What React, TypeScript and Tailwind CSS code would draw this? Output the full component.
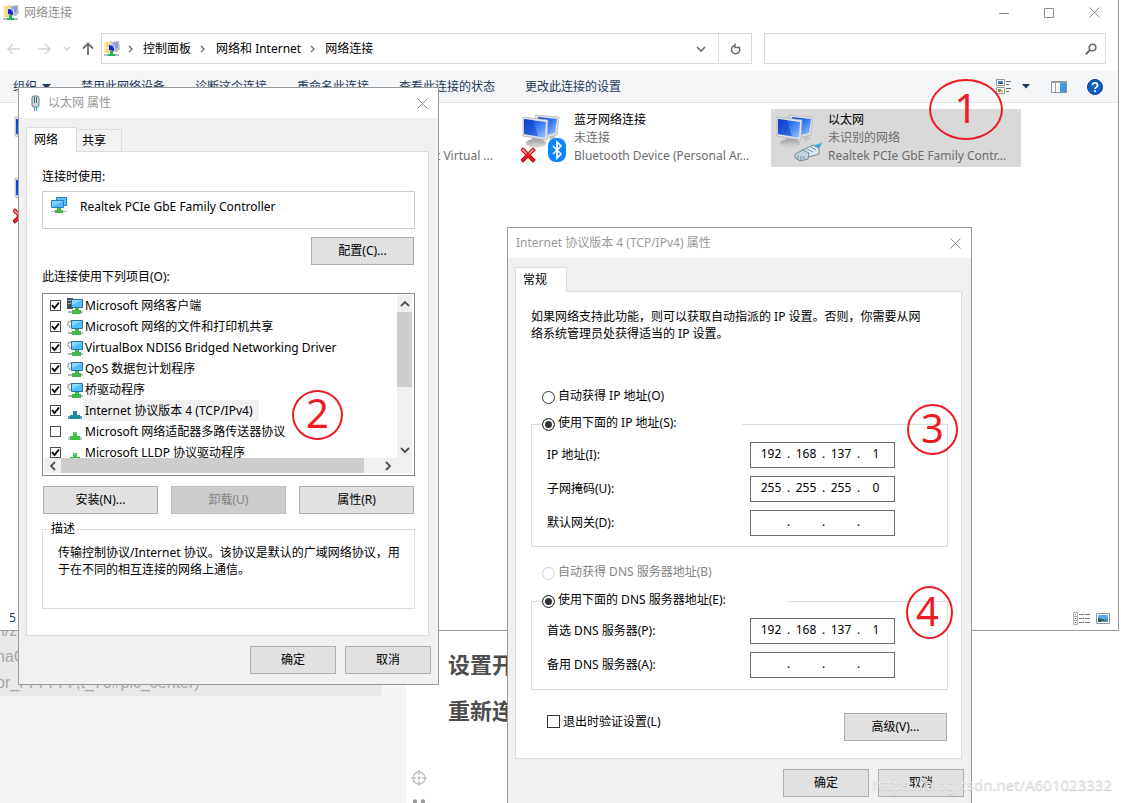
import type { ReactNode } from "react";
import clsx from "clsx";

/* ---------- icons ---------- */

function FolderNetIcon() {
  return (
    <svg width="16" height="16" viewBox="0 0 16 16" className="shrink-0">
      <path d="M0 1h5l1-1h2v12H0z" fill="#f6dc7c" />
      <path d="M0 1h2v11H0z" fill="#fbeeb0" />
      <path d="M7 1l8-1 1 8-3 3H8z" fill="#b9bfca" />
      <path d="M9 2l5-1v6l-4 1z" fill="#8c9bd8" />
      <path d="M4 3l7 1v7l-6-1z" fill="#d5d9e2" />
      <path d="M5 4l5 1v5l-5-1z" fill="#1226c8" />
      <path d="M7 4l3 1v3z" fill="#5f7cf0" />
      <path d="M6 10h3v3h2v2H4v-2h2z" fill="#1db954" />
      <path d="M0 13h4v2H0zM11 13h4v2h-4z" fill="#b9bec4" />
    </svg>
  );
}

function MonitorsIcon({ kind, off }: { kind: "bluetooth" | "cable" | "none"; off?: boolean }) {
  return (
    <svg width="48" height="54" viewBox="0 0 48 54" className="shrink-0">
      <defs>
        <linearGradient id="screen" x1="0" y1="0" x2="1" y2="1">
          <stop offset="0" stopColor="#0d3fcb" />
          <stop offset="0.45" stopColor="#2f74ee" />
          <stop offset="1" stopColor="#9cc8ff" />
        </linearGradient>
        <linearGradient id="stand" x1="0" y1="0" x2="0" y2="1">
          <stop offset="0" stopColor="#9b9da0" />
          <stop offset="1" stopColor="#dcdcdc" />
        </linearGradient>
      </defs>
      <path d="M27 26l5-1 4 5-6 3z" fill="#c4c6c8" />
      <path d="M14 6l24 2-2 18-16 4z" fill="#dedfdf" stroke="#b3b5b8" strokeWidth="0.7" />
      <path d="M17 8l19 2-2 14-13 3z" fill="url(#screen)" />
      <path d="M11 27l11 2v6H11z" fill="#a9abad" />
      <ellipse cx="15" cy="34" rx="10" ry="4" fill="url(#stand)" stroke="#bdbdbd" strokeWidth="0.6" />
      <path d="M2 8l25 3-1 20-24-4z" fill="#e4e5e5" stroke="#a9abad" strokeWidth="0.7" />
      <path d="M3 10l22 3-1 16-21-4z" fill="url(#screen)" />
      <path d="M3 10l9 1 5 16-14-2z" fill="#0b37be" opacity="0.45" />
      {off && (
        <g strokeLinecap="square" fill="none">
          <path d="M2 41l10 10M12 41L2 51" stroke="#b00000" strokeWidth="4" />
          <path d="M2 41l10 10M12 41L2 51" stroke="#ea1c22" strokeWidth="2.4" />
          <path d="M2 41l3 3M12 41l-3 3" stroke="#f58a8a" strokeWidth="2" />
        </g>
      )}
      {kind === "bluetooth" && (
        <g>
          <rect x="27" y="29" width="18" height="24" rx="8" fill="#0a84ff" />
          <path d="M32 37l8 8-4 4V33l4 4-8 8" fill="none" stroke="#fff" strokeWidth="1.7" />
        </g>
      )}
      {kind === "cable" && (
        <g stroke="#5e7484" strokeWidth="0.8">
          <path d="M38 37l9-3-3 5-4 2z" fill="#27a6dc" stroke="#6fb8d6" />
          <path d="M26 42l12-6 6 3v6l-14 4-4-2z" fill="#dbe9f3" />
          <path d="M20 45l8-4 6 3-1 6-8 2-5-3z" fill="#c5d5e0" />
          <path d="M23 46v4M26 47v4M29 47v3M32 40l6 3M36 38l5 3" fill="none" />
        </g>
      )}
    </svg>
  );
}

function AdapterIcon() {
  return (
    <svg width="16" height="16" viewBox="0 0 16 16" className="shrink-0">
      <path d="M5.500.5h10v8h-10z" fill="#5cc3fb" stroke="#2a7fb5" />
      <path d="M.5 3.500h12v7H.5z" fill="#48bafb" stroke="#2a7fb5" />
      <path d="M1 4h11L1 10z" fill="#7fd2ff" />
      <path d="M6 11h4v2h2v3H4v-3h2z" fill="#44b649" />
      <path d="M0 14h4v1H0zM12 14h4v1h-4z" fill="#b0b4b8" />
    </svg>
  );
}

function ServiceIcon({ kind }: { kind: string }) {
  if (kind === "protocol" || kind === "selected") {
    const sel = kind === "selected";
    return (
      <svg width="16" height="16" viewBox="0 0 16 16" className="shrink-0">
        <path d="M1 13h4v3H1zM11 13h4v3h-4z" fill={sel ? "#4e9fd4" : "#c5cac8"} />
        <path d="M6 8h4v4h3v4H3v-4h3z" fill={sel ? "#1b8a94" : "#3fbf46"} />
        <path d="M6 8h4v2H6z" fill={sel ? "#2b7fa6" : "#64cf68"} />
      </svg>
    );
  }
  return (
    <svg width="16" height="16" viewBox="0 0 16 16" className="shrink-0">
      {kind === "client" ? (
        <>
          <path d="M0 0h6v11H0z" fill="#4a4f54" />
          <path d="M1 2h3v1H1zM1 5h3v1H1z" fill="#a5abb0" />
        </>
      ) : (
        <circle cx="4" cy="5" r="3" fill="none" stroke="#9aa1a6" strokeWidth="2" strokeDasharray="1.700 .9" />
      )}
      <path d="M4.500 1.500h11v8h-11z" fill="#4fbdff" stroke="#2c6f9b" />
      <path d="M5 2h10L5 7z" fill="#8cd7ff" />
      <path d="M8 10h4v2h2v4H5v-4h3z" fill="#43b84a" />
      <path d="M1 13h4v2H1zM14 13h2v2h-2z" fill="#b0b4b8" />
    </svg>
  );
}

function PlugIcon() {
  return (
    <svg width="10" height="16" viewBox="0 0 10 16" className="shrink-0">
      <rect x="1" y="1" width="7" height="11" rx="2" fill="#c9d6de" stroke="#69808f" />
      <path d="M3.500 2v6M5.500 2v6" stroke="#546b7b" />
      <path d="M3.500 12v4M5.500 12v4" stroke="#2f9bd0" />
    </svg>
  );
}

function CloseIcon() {
  return (
    <svg width="11" height="11" viewBox="0 0 11 11" fill="none" stroke="#8c8c8c">
      <path d="M.5.5l10 10M10.500.5l-10 10" />
    </svg>
  );
}

function Chevron({ d, color = "#6d6d6d", width = 1.3 }: { d: string; color?: string; width?: number }) {
  return (
    <svg width="10" height="10" viewBox="0 0 10 10" fill="none" stroke={color} strokeWidth={width} className="shrink-0">
      <path d={d} />
    </svg>
  );
}

const RIGHT = "M3 2l3 3-3 3";
const DOWN = "M1 3l4 4 4-4";

function Arrow({ flip }: { flip?: boolean }) {
  return (
    <svg width="14" height="12" viewBox="0 0 14 12" fill="none" stroke="#d4d4d4" strokeWidth="1.500" className="shrink-0">
      <path d={flip ? "M1 6h12M8 1l5 5-5 5" : "M13 6H1M6 1L1 6l5 5"} />
    </svg>
  );
}

/* ---------- small controls ---------- */

function PushButton({ children, className, disabled }: { children: ReactNode; className?: string; disabled?: boolean }) {
  return (
    <button
      type="button"
      disabled={disabled}
      className={clsx(
        "h-[28px] border text-center",
        disabled ? "border-[#bfbfbf] bg-[#cccccc] text-[#838383]" : "border-[#adadad] bg-[#e1e1e1]",
        className
      )}
    >
      {children}
    </button>
  );
}

function Check({ id, checked, size = "size-[11px]", border = "border-[#4d4d4d]" }: { id: string; checked?: boolean; size?: string; border?: string }) {
  return (
    <span className="grid shrink-0 place-items-center">
      <input id={id} type="checkbox" defaultChecked={checked} className={clsx("peer appearance-none border bg-white [grid-area:1/1]", size, border)} />
      <svg width="9" height="9" viewBox="0 0 9 9" className="pointer-events-none hidden [grid-area:1/1] peer-checked:block">
        <path d="M1 4l2.500 3L8 1.500" fill="none" stroke="#000" strokeWidth="1.900" />
      </svg>
    </span>
  );
}

function Radio({ id, name, checked, disabled, children }: { id: string; name: string; checked?: boolean; disabled?: boolean; children: ReactNode }) {
  return (
    <span className="flex h-4 items-center gap-[3px]">
      <input
        id={id}
        name={name}
        type="radio"
        defaultChecked={checked}
        disabled={disabled}
        className="size-[13px] appearance-none rounded-full border border-[#333] bg-white checked:bg-[#333] checked:shadow-[inset_0_0_0_2px_white] disabled:border-[#ccc]"
      />
      <label htmlFor={id} className={clsx("pb-[2px] leading-4", disabled && "text-[#838383]")}>{children}</label>
    </span>
  );
}

function AddressRow({ label, octets }: { label: string; octets: string[] }) {
  return (
    <div className="flex h-[26px] items-center justify-between pr-[52px] pl-[15px]">
      <span>{label}</span>
      <div className="flex h-[26px] w-[145px] items-center border border-[#6d6d6d] bg-white pb-[2px] pl-[5px]">
        {octets.map((octet, i) => (
          <span key={i} className="flex items-center">
            {i > 0 && <span className="w-[5px] text-center">.</span>}
            <input aria-label={`${label} ${i + 1}`} defaultValue={octet} className="w-[30px] bg-transparent text-center" />
          </span>
        ))}
      </div>
    </div>
  );
}

function Mark({ children, className }: { children: ReactNode; className: string }) {
  return (
    <div
      className={clsx(
        "pointer-events-none absolute z-20 flex items-center justify-center rounded-[50%] border-2 border-[#ed1c24] pb-1 text-[40px] leading-none text-[#ed1c24]",
        className
      )}
    >
      {children}
    </div>
  );
}

/* ---------- explorer window ---------- */

function Connection({ name, status, device, kind, off, selected }: {
  name?: string; status?: string; device?: string; kind: "bluetooth" | "cable" | "none"; off?: boolean; selected?: boolean;
}) {
  return (
    <div className={clsx("flex h-[58px] w-[250px] gap-[5px] pl-1", selected && "bg-[#d9d9d9]")}>
      <MonitorsIcon kind={kind} off={off} />
      <div className="pt-[2px] leading-[18px] whitespace-nowrap text-[#6d6d6d]">
        <div className="h-[18px] text-black">{name}</div>
        <div className="h-[18px]">{status}</div>
        <div>{device}</div>
      </div>
    </div>
  );
}

function Explorer() {
  return (
    <section className="absolute top-0 right-[2px] left-0 flex h-[631px] flex-col border-r border-b border-[#9a9a9a] bg-white">
      <header className="flex h-[25px] items-center pl-[3px] text-[#8f8f8f]">
        <FolderNetIcon />
        <h1 className="ml-[5px] flex-1">网络连接</h1>
        <button type="button" aria-label="最小化" className="flex w-[45px] justify-center">
          <svg width="10" height="10" viewBox="0 0 10 10" stroke="#8c8c8c"><path d="M0 5.500h10" /></svg>
        </button>
        <button type="button" aria-label="最大化" className="flex w-[45px] justify-center">
          <svg width="10" height="10" viewBox="0 0 10 10" fill="none" stroke="#8c8c8c"><path d="M.5.5h9v9h-9z" /></svg>
        </button>
        <button type="button" aria-label="关闭" className="flex w-[47px] justify-center"><CloseIcon /></button>
      </header>

      <nav className="flex h-[46px] items-center pt-px pr-[12px] pl-[7px]">
        <div className="flex w-[94px] items-center">
          <Arrow />
          <span className="ml-4"><Arrow flip /></span>
          <span className="ml-[11px]"><Chevron d="M2 3l3 3 3-3" color="#cfcfcf" /></span>
          <svg width="12" height="13" viewBox="0 0 12 13" fill="none" stroke="#6d6d6d" strokeWidth="1.800" className="ml-[10px]">
            <path d="M6 13V1.500M1 6.500l5-5 5 5" />
          </svg>
        </div>
        <div className="flex h-[31px] flex-1 items-center border border-[#d9d9d9] pl-[2px]">
          <FolderNetIcon />
          <span className="mx-[6px]"><Chevron d={RIGHT} /></span>
          <a href="#panel" className="ml-px">控制面板</a>
          <span className="mx-[7px]"><Chevron d={RIGHT} /></span>
          <a href="#internet" className="ml-px">网络和 Internet</a>
          <span className="mx-[7px]"><Chevron d={RIGHT} /></span>
          <a href="#connections">网络连接</a>
          <span className="ml-auto pr-3"><Chevron d={DOWN} width={1.6} /></span>
          <button type="button" aria-label="刷新" className="flex h-full w-[33px] items-center justify-center border-l border-[#d9d9d9]">
            <svg width="11" height="12" viewBox="0 0 11 12" fill="none" stroke="#6d6d6d" strokeWidth="1.500">
              <path d="M8.500 3.500A4.200 4.200 0 1 1 4.500 2.500" />
              <path d="M5 .5v4h4" />
            </svg>
          </button>
        </div>
        <div className="ml-3 flex h-[31px] w-[342px] items-center border border-[#d9d9d9] pr-2">
          <input aria-label="搜索" type="search" className="h-full min-w-0 flex-1 pl-2" />
          <svg width="12" height="12" viewBox="0 0 12 12" fill="none" stroke="#6d6d6d">
            <circle cx="7.500" cy="4.500" r="3.300" strokeWidth="1.600" />
            <path d="M5 7L.8 11.200" strokeWidth="2" />
          </svg>
        </div>
      </nav>

      <div className="flex h-8 items-center gap-[30px] border-b border-[#e5e5e5] bg-[#f5f6f7] pr-[15px] pl-[13px] text-[#1e395b]">
        <button type="button" className="flex items-center gap-[5px]">
          组织
          <svg width="9" height="5" viewBox="0 0 9 5"><path d="M0 0h9L4.500 5z" fill="#1e395b" /></svg>
        </button>
        <button type="button">禁用此网络设备</button>
        <button type="button">诊断这个连接</button>
        <button type="button">重命名此连接</button>
        <button type="button">查看此连接的状态</button>
        <button type="button">更改此连接的设置</button>
        <div className="ml-auto flex items-center">
          <svg width="16" height="15" viewBox="0 0 16 15" fill="none">
            <path d="M.5.5h8v6h-8zM.5 8.500h8v6h-8z" fill="#fff" stroke="#9a9a9a" />
            <path d="M2 2h5v3H2z" fill="#3d86d8" /><path d="M2 4h5v1H2z" fill="#27604a" />
            <path d="M2 10h3v3H2z" fill="#56a33e" /><path d="M4 11h3v2H4z" fill="#e0a63a" />
            <path d="M10 2.500h5M10 5.500h3M10 9.500h5M10 12.500h3" stroke="#6d6d6d" />
          </svg>
          <svg width="8" height="5" viewBox="0 0 8 5" className="ml-[10px]"><path d="M0 0h8L4 4.500z" fill="#1e395b" /></svg>
          <svg width="16" height="12" viewBox="0 0 16 12" className="ml-[21px]">
            <path d="M.5.5h15v11H.5z" fill="#fff" stroke="#8a9097" />
            <path d="M1 1h14v1H1zM4 2h1v9H4z" fill="#9aa5af" />
            <path d="M9 2h6v9H9z" fill="#3f97df" />
          </svg>
          <svg width="16" height="16" viewBox="0 0 16 16" className="ml-5">
            <circle cx="8" cy="8" r="7.500" fill="#0a5fc0" stroke="#083f86" />
            <path d="M5.500 6.200a2.500 2.300 0 1 1 3.700 2C8.400 8.700 8 9 8 10" fill="none" stroke="#fff" strokeWidth="1.800" />
            <circle cx="8" cy="12.200" r="1.100" fill="#fff" />
          </svg>
        </div>
      </div>

      <div className="grid flex-1 grid-cols-[repeat(4,250px)] content-start gap-x-1 gap-y-[3px] pt-[6px] pl-[9px]">
        <Connection kind="none" />
        <Connection kind="none" device="Microsoft Wi-Fi Direct Virtual ..." />
        <Connection kind="bluetooth" off name="蓝牙网络连接" status="未连接" device="Bluetooth Device (Personal Ar..." />
        <Connection kind="cable" selected name="以太网" status="未识别的网络" device="Realtek PCIe GbE Family Contr..." />
        <Connection kind="none" off />
      </div>

      <footer className="flex h-6 items-center gap-[6px] pr-2 pl-[9px] text-[#1e395b]">
        <span className="flex-1">5</span>
        <svg width="17" height="13" viewBox="0 0 17 13" fill="none">
          <path d="M.5.5h4v12h-4zM.5 4.500h4M.5 8.500h4" stroke="#b0b0b0" />
          <path d="M2 2h1v1H2zM2 6h1v1H2z" fill="#2d6fb8" /><path d="M2 10h1v1H2z" fill="#c22" />
          <path d="M6 2.500h5M12 2.500h5M6 6.500h5M12 6.500h5M6 10.500h5M12 10.500h5" stroke="#7c7c7c" />
        </svg>
        <svg width="14" height="11" viewBox="0 0 14 11">
          <path d="M.5.5h13v10H.5z" fill="#fff" stroke="#8d9399" />
          <path d="M2 2h10v7H2z" fill="#5fa8ea" />
          <path d="M2 5l4 1 6 1v2H2z" fill="#27604a" />
          <path d="M5 8l7-1v2H5z" fill="#5c9bd6" />
        </svg>
      </footer>
    </section>
  );
}

/* ---------- ethernet properties ---------- */

const services = [
  { name: "Microsoft 网络客户端", kind: "client", on: true },
  { name: "Microsoft 网络的文件和打印机共享", kind: "service", on: true },
  { name: "VirtualBox NDIS6 Bridged Networking Driver", kind: "service", on: true },
  { name: "QoS 数据包计划程序", kind: "service", on: true },
  { name: "桥驱动程序", kind: "service", on: true },
  { name: "Internet 协议版本 4 (TCP/IPv4)", kind: "selected", on: true },
  { name: "Microsoft 网络适配器多路传送器协议", kind: "protocol", on: false },
  { name: "Microsoft LLDP 协议驱动程序", kind: "protocol", on: true },
];

function ServiceList() {
  return (
    <div className="mt-[8px] flex h-[183px] flex-col border border-[#828790] bg-white p-px pr-[2px]">
      <div className="flex h-[163px]">
        <ul className="flex-1 overflow-hidden pl-[6px]">
          {services.map((s, i) => (
            <li key={s.name} className="flex h-[21px] items-center">
              <Check id={`svc-${i}`} checked={s.on} />
              <span className="ml-[6px]"><ServiceIcon kind={s.kind} /></span>
              <label
                htmlFor={`svc-${i}`}
                className={clsx("h-[21px] pr-[6px] pl-[2px] leading-[21px] whitespace-nowrap", s.kind === "selected" && "bg-[#f0f0f0]")}
              >
                {s.name}
              </label>
            </li>
          ))}
        </ul>
        <div className="flex w-[15px] flex-col items-center bg-[#f0f0f0]">
          <div className="flex h-[17px] items-center"><Chevron d="M1 7l4-4 4 4" color="#505050" width={1.8} /></div>
          <div className="h-[75px] w-full bg-[#cdcdcd]" />
          <div className="mt-auto flex h-[17px] items-center"><Chevron d={DOWN} color="#505050" width={1.8} /></div>
        </div>
      </div>
      <div className="flex h-[15px] items-center bg-[#f0f0f0]">
        <div className="flex w-[17px] justify-center"><Chevron d="M7 1L3 5l4 4" color="#505050" width={1.8} /></div>
        <div className="h-full w-[303px] bg-[#cdcdcd]" />
        <div className="mr-4 ml-auto flex w-[17px] justify-center"><Chevron d="M3 1l4 4-4 4" color="#505050" width={1.8} /></div>
      </div>
    </div>
  );
}

function EthernetDialog() {
  return (
    <section className="absolute top-[87px] left-[18px] z-10 w-[421px] border border-[#999] bg-[#f0f0f0] pb-[10px]">
      <header className="flex h-[30px] items-center bg-white pr-[10px] pl-[12px] text-[#999]">
        <PlugIcon />
        <h2 className="ml-[7px] flex-1">以太网 属性</h2>
        <button type="button" aria-label="关闭"><CloseIcon /></button>
      </header>

      <div className="pr-[9px] pl-[7px]">
        <div role="tablist" className="flex h-[33px] items-end">
          <button type="button" role="tab" aria-selected="true" className="relative z-10 -mb-px h-[25px] w-[51px] border border-b-0 border-[#dcdcdc] bg-white pr-[11px] pb-px text-center">网络</button>
          <button type="button" role="tab" aria-selected="false" className="h-[22px] w-[45px] border border-b-0 border-l-0 border-[#dcdcdc] bg-[#f2f2f2] pr-[10px] text-center">共享</button>
        </div>

        <div className="border border-[#dcdcdc] bg-white pt-[17px] pr-[13px] pb-[26px] pl-[15px]">
          <p className="leading-4">连接时使用:</p>
          <div className="mt-[6px] flex h-[38px] border border-[#ccc] pt-[5px] pl-[8px]">
            <AdapterIcon />
            <span className="ml-[13px] leading-5">Realtek PCIe GbE Family Controller</span>
          </div>
          <div className="mt-2 flex justify-end pr-px">
            <PushButton className="w-[103px]">配置(C)...</PushButton>
          </div>
          <p className="mt-[4px] leading-4">此连接使用下列项目(O):</p>
          <ServiceList />
          <div className="mt-[10px] flex justify-between pr-px pl-px">
            <PushButton className="w-[115px]">安装(N)...</PushButton>
            <PushButton className="w-[115px]" disabled>卸载(U)</PushButton>
            <PushButton className="w-[115px]">属性(R)</PushButton>
          </div>
          <fieldset className="mt-[7px] h-[88px] border border-[#dcdcdc] pl-[15px]">
            <legend className="-ml-[9px] px-[2px] leading-4">描述</legend>
            <p className="mt-[7px] w-[345px] leading-[17px]">
              传输控制协议/Internet 协议。该协议是默认的广域网络协议，用于在不同的相互连接的网络上通信。
            </p>
          </fieldset>
        </div>
      </div>

      <div className="mt-[10px] flex justify-end gap-[9px] pr-[7px]">
        <PushButton className="w-[86px]">确定</PushButton>
        <PushButton className="w-[86px]">取消</PushButton>
      </div>
    </section>
  );
}

/* ---------- IPv4 properties ---------- */

function Ipv4Dialog() {
  const empty = ["", "", "", ""];
  return (
    <section className="absolute top-[227px] left-[507px] z-10 w-[465px] border border-[#999] bg-[#f0f0f0] pb-4">
      <header className="flex h-[30px] items-center bg-white pr-[10px] pl-[8px] text-[#999]">
        <h2 className="flex-1">Internet 协议版本 4 (TCP/IPv4) 属性</h2>
        <button type="button" aria-label="关闭"><CloseIcon /></button>
      </header>

      <div className="pr-[9px] pl-[7px]">
        <div role="tablist" className="flex h-[33px] items-end">
          <button type="button" role="tab" aria-selected="true" className="relative z-10 -mb-px h-[25px] w-[52px] border border-b-0 border-[#dcdcdc] bg-white pr-3 pb-px text-center">常规</button>
        </div>

        <div className="border border-[#dcdcdc] bg-white pt-[16px] pr-[13px] pb-[17px] pl-[15px]">
          <p className="w-[400px] leading-[17px]">
            如果网络支持此功能，则可以获取自动指派的 IP 设置。否则，你需要从网络系统管理员处获得适当的 IP 设置。
          </p>

          <div className="mt-[47px] pl-[11px]">
            <Radio id="ip-auto" name="ip">自动获得 IP 地址(O)</Radio>
          </div>
          <fieldset className="mt-[11px] h-[131px] border border-[#dcdcdc]">
            <legend className="ml-[10px] w-[200px]">
              <Radio id="ip-manual" name="ip" checked>使用下面的 IP 地址(S):</Radio>
            </legend>
            <div className="mt-[10px] flex flex-col gap-2">
              <AddressRow label="IP 地址(I):" octets={["192", "168", "137", "1"]} />
              <AddressRow label="子网掩码(U):" octets={["255", "255", "255", "0"]} />
              <AddressRow label="默认网关(D):" octets={empty} />
            </div>
          </fieldset>

          <div className="mt-[18px] pl-[11px]">
            <Radio id="dns-auto" name="dns" disabled>自动获得 DNS 服务器地址(B)</Radio>
          </div>
          <fieldset className="mt-[12px] h-[97px] border border-[#dcdcdc]">
            <legend className="ml-[10px] w-[246px]">
              <Radio id="dns-manual" name="dns" checked>使用下面的 DNS 服务器地址(E):</Radio>
            </legend>
            <div className="mt-[9px] flex flex-col gap-2">
              <AddressRow label="首选 DNS 服务器(P):" octets={["192", "168", "137", "1"]} />
              <AddressRow label="备用 DNS 服务器(A):" octets={empty} />
            </div>
          </fieldset>

          <div className="mt-[23px] flex h-7 justify-between pr-px pl-4">
            <div className="flex h-[17px] items-center gap-[3px]">
              <Check id="validate" size="size-[13px]" border="border-[#333]" />
              <label htmlFor="validate">退出时验证设置(L)</label>
            </div>
            <PushButton className="w-[103px]">高级(V)...</PushButton>
          </div>
        </div>
      </div>

      <div className="mt-[10px] flex justify-end gap-[9px] pr-[7px]">
        <PushButton className="w-[86px]">确定</PushButton>
        <PushButton className="w-[86px]">取消</PushButton>
      </div>
    </section>
  );
}

/* ---------- editor page behind the windows ---------- */

function EditorPage() {
  return (
    <div className="flex min-h-screen pt-[618px]">
      <div className="w-[406px] shrink-0 bg-[#f5f5f5]">
        <div className="h-[78px] w-[382px] rounded-br-sm bg-[#e8e8e8] font-['Liberation_Sans',sans-serif] text-[16px] leading-[26px] whitespace-nowrap text-[#a8a8a8]">
          <div className="-ml-1">n/z</div>
          <div className="-ml-1">naC</div>
          <div className="-ml-1">or_FFFFFF,t_70#pic_center)</div>
        </div>
      </div>
      <div className="flex-1 pt-[23px] pl-[42px] text-[22px] leading-[46px] font-bold text-[#4d4d4d]">
        <p>设置开</p>
        <p>重新连</p>
      </div>
      <div className="absolute top-[770px] left-[411px] flex flex-col items-center gap-[13px]">
        <svg width="16" height="16" viewBox="0 0 16 16" fill="none" stroke="#c4c4c4" strokeWidth="1.500">
          <circle cx="8" cy="8" r="6" />
          <path d="M8 0v5M8 11v5M0 8h5M11 8h5" />
          <path d="M6.500 8h3" strokeWidth="3" />
        </svg>
        <svg width="14" height="5" viewBox="0 0 14 5" fill="#999">
          <circle cx="3" cy="2.500" r="2.200" /><circle cx="11" cy="2.500" r="2.200" />
        </svg>
      </div>
    </div>
  );
}

export default function App() {
  return (
    <main className="relative h-screen overflow-hidden bg-white font-['Noto_Sans','Noto_Sans_CJK_SC',sans-serif] text-[12px] leading-4 text-black">
      <EditorPage />
      <Explorer />
      <EthernetDialog />
      <Ipv4Dialog />

      <Mark className="top-[79px] left-[929px] h-[61px] w-[74px]">1</Mark>
      <Mark className="top-[390px] left-[292px] h-[50px] w-[51px]">2</Mark>
      <Mark className="top-[404px] left-[907px] h-[51px] w-[51px]">3</Mark>
      <Mark className="top-[586px] left-[906px] h-[53px] w-[47px] pr-1">4</Mark>

      <div className="absolute right-[9px] bottom-[9px] z-30 text-[15px] leading-5 text-[#f0f0f0]/80 [text-shadow:0_1px_1px_#c4c4c4]">
        https://blog.csdn.net/A601023332
      </div>
    </main>
  );
}
